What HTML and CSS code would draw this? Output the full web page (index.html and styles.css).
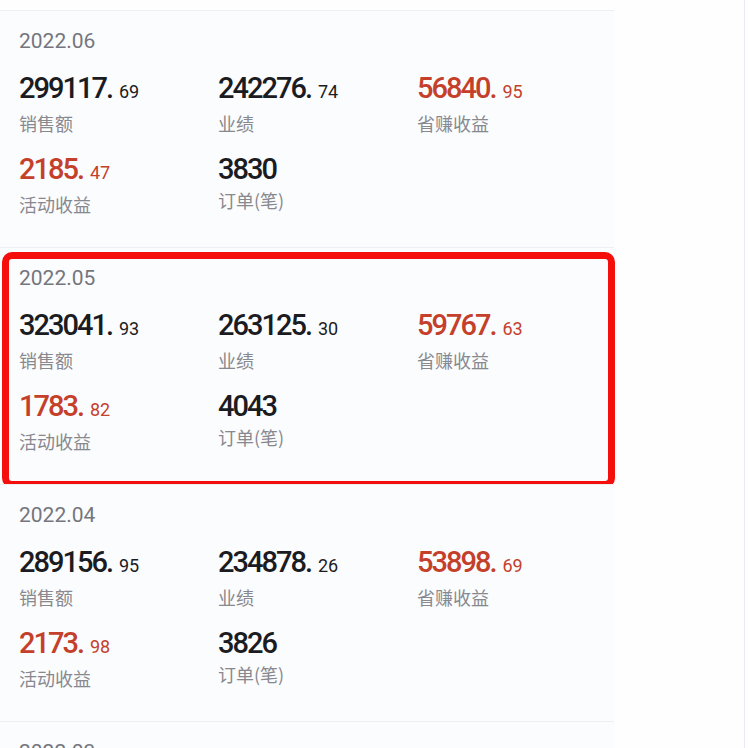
FILE: index.html
```html
<!DOCTYPE html>
<html lang="zh-CN">
<head>
    <meta charset="UTF-8">
    <meta name="viewport" content="width=device-width, initial-scale=1.0">
    <title>月度收益</title>
    <link rel="stylesheet" href="styles.css">
</head>
<body>
    <div class="page">
        <div class="list">
            <div class="month">
                <div class="date">2022.06</div>
                <div class="stats">
                    <div class="stat"><div class="num">299117.<span class="dec">69</span></div><div class="label">销售额</div></div>
                    <div class="stat"><div class="num">242276.<span class="dec">74</span></div><div class="label">业绩</div></div>
                    <div class="stat"><div class="num red">56840.<span class="dec">95</span></div><div class="label">省赚收益</div></div>
                    <div class="stat"><div class="num red">2185.<span class="dec">47</span></div><div class="label">活动收益</div></div>
                    <div class="stat"><div class="num">3830</div><div class="label">订单(笔)</div></div>
                </div>
            </div>

            <div class="month marked">
                <div class="date">2022.05</div>
                <div class="stats">
                    <div class="stat"><div class="num">323041.<span class="dec">93</span></div><div class="label">销售额</div></div>
                    <div class="stat"><div class="num">263125.<span class="dec">30</span></div><div class="label">业绩</div></div>
                    <div class="stat"><div class="num red">59767.<span class="dec">63</span></div><div class="label">省赚收益</div></div>
                    <div class="stat"><div class="num red">1783.<span class="dec">82</span></div><div class="label">活动收益</div></div>
                    <div class="stat"><div class="num">4043</div><div class="label">订单(笔)</div></div>
                </div>
                <div class="highlight"></div>
            </div>

            <div class="month">
                <div class="date">2022.04</div>
                <div class="stats">
                    <div class="stat"><div class="num">289156.<span class="dec">95</span></div><div class="label">销售额</div></div>
                    <div class="stat"><div class="num">234878.<span class="dec">26</span></div><div class="label">业绩</div></div>
                    <div class="stat"><div class="num red">53898.<span class="dec">69</span></div><div class="label">省赚收益</div></div>
                    <div class="stat"><div class="num red">2173.<span class="dec">98</span></div><div class="label">活动收益</div></div>
                    <div class="stat"><div class="num">3826</div><div class="label">订单(笔)</div></div>
                </div>
            </div>

            <div class="month">
                <div class="date">2022.03</div>
            </div>
        </div>
    </div>
</body>
</html>
```

FILE: styles.css
```css
body {
    margin: 0;
    background-color: #fefeff;
    font-family: Roboto, "Noto Sans CJK SC", sans-serif;
    overflow: hidden;
}

.page {
    width: 745px;
    height: 748px;
    border-right: 1px solid #e8ebef;
    padding-top: 10px;
    box-sizing: border-box;
}

.list {
    width: 614px;
}

.month {
    position: relative;
    height: 237px;
    box-sizing: border-box;
    padding: 18px 0 0 19px;
    border-top: 1px solid #eceff3;
    background-color: #fbfcfd;
}

.date {
    font-size: 21px;
    line-height: 24px;
    color: #75757e;
}

.stats {
    display: grid;
    grid-template-columns: 199px 199px 199px;
    row-gap: 18px;
    margin-top: 19px;
}

.num {
    font-size: 29px;
    line-height: 32px;
    font-weight: 500;
    letter-spacing: -2px;
    color: #1b1b22;
}

.num.red {
    color: #c4402b;
}

.dec {
    font-size: 18px;
    font-weight: 400;
    letter-spacing: 0;
    margin-left: 7px;
}

.label {
    margin-top: 3px;
    font-family: "Noto Sans CJK SC", sans-serif;
    font-size: 18px;
    line-height: 24px;
    color: #88888f;
}

.highlight {
    position: absolute;
    left: 2px;
    top: 4px;
    width: 613px;
    height: 236px;
    box-sizing: border-box;
    border: 7px solid #f50f0c;
    border-radius: 10px;
}
```
